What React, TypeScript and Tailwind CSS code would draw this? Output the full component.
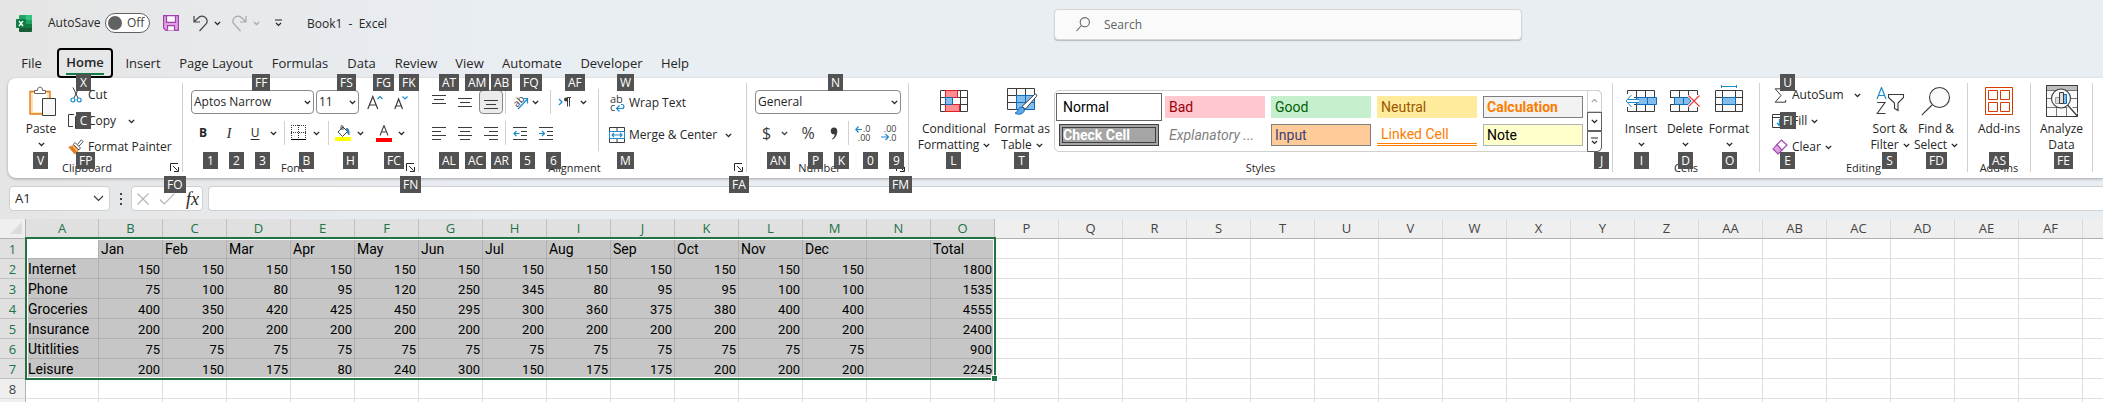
import React from "react";
import clsx from "clsx";

type Kids = { children?: React.ReactNode };

function Chev({ className }: { className?: string }) {
  return (
    <svg className={clsx("shrink-0", className)} width="7" height="5" viewBox="0 0 7 5" fill="none" stroke="currentColor" strokeWidth="1.3" aria-hidden="true">
      <path d="M.8.9 3.5 3.5 6.2.9" />
    </svg>
  );
}

function Tip({ at, children }: Kids & { at: string }) {
  return (
    <kbd className={clsx("absolute z-10 flex h-[17px] min-w-[15px] items-center justify-center bg-[#525252] px-[3px] font-[inherit] text-[12px] leading-[17px] text-white", at)}>
      {children}
    </kbd>
  );
}

function Sep({ className }: { className?: string }) {
  return <span className={clsx("mx-px w-px shrink-0 bg-[#d0d0d0]", className ?? "h-6")} />;
}

function Launcher({ name }: { name: string }) {
  return (
    <button aria-label={name} className="absolute right-[3px] bottom-0 text-[#262626]">
      <svg width="9" height="9" viewBox="0 0 9 9" fill="none" stroke="currentColor">
        <path d="M.5 8V.5H8M3 3l4.5 4.5M8.5 4v4.5H4" />
      </svg>
    </button>
  );
}

function Group({ label, className, launcher, tips, children }: Kids & { label?: string; className: string; launcher?: boolean; tips?: React.ReactNode }) {
  return (
    <section className={clsx("relative flex shrink-0 flex-col border-r border-[#d0d0d0]", className)}>
      <div className="flex h-[79px] items-start">{children}</div>
      <h2 className={clsx("h-[10px] text-center text-[11px] leading-3", launcher && "pr-4")}>{label}</h2>
      {launcher && <Launcher name={`${label} settings`} />}
      {tips}
    </section>
  );
}

function Big({ icon, lines, chev, className }: { icon: React.ReactNode; lines: string[]; chev?: "below" | "inline"; className: string }) {
  return (
    <button className={clsx("flex shrink-0 flex-col items-center pt-[2px] leading-4 whitespace-nowrap", className)}>
      <span className="mb-1 flex h-8 items-center justify-center">{icon}</span>
      {lines.map((l, i) => (
        <span key={l} className="flex items-center gap-1">
          {l}
          {chev === "inline" && i === lines.length - 1 && <Chev />}
        </span>
      ))}
      {chev === "below" && (
        <span className="flex h-[14px] items-center">
          <Chev />
        </span>
      )}
    </button>
  );
}

function Row({ icon, text, chev }: { icon: React.ReactNode; text: string; chev?: string }) {
  return (
    <button className="flex h-6 items-center gap-1 whitespace-nowrap">
      <span className="flex w-4 justify-center">{icon}</span>
      {text}
      {chev && <Chev className={chev} />}
    </button>
  );
}

function Combo({ label, value, className }: { label: string; value: string; className: string }) {
  return (
    <span className={clsx("relative flex h-6 shrink-0 items-center", className)}>
      <select aria-label={label} defaultValue={value} className="h-6 w-full appearance-none rounded-[4px] border border-[#8a8a8a] bg-white pl-[2px] text-[12px]">
        <option>{value}</option>
      </select>
      <Chev className="pointer-events-none absolute right-[3px]" />
    </span>
  );
}

function Tool({ label, className, children, pressed }: Kids & { label: string; className?: string; pressed?: boolean }) {
  return (
    <button aria-label={label} aria-pressed={pressed} className={clsx("flex h-6 shrink-0 items-center", className ?? "w-[26px] justify-center")}>
      {children}
    </button>
  );
}

/* Horizontal rules of the alignment icons: [x, width, y] */
function Bars({ bars }: { bars: number[][] }) {
  return (
    <svg width="14" height="14" viewBox="0 0 14 14" fill="#3b3b3b">
      {bars.map(([x, w, y]) => (
        <rect key={y} x={x} y={y} width={w} height="1" />
      ))}
    </svg>
  );
}

const PasteIcon = (
  <svg width="32" height="30" viewBox="-4 0 32 30" fill="none">
    <path d="M1 5.5h20V28H1z" fill="#fde3b0" stroke="#e07b1c" strokeWidth="1.4" />
    <path d="M4 7h14v19H4z" fill="#fff" />
    <path d="M5.500 7.500V4.500h3C8.500 2 9.500 1 11 1s2.500 1 2.500 3.500h3v3z" fill="#fff" stroke="#666" />
    <path d="M13.500 12.500h13v17h-13z" fill="#f8f8f8" stroke="#3b3b3b" />
  </svg>
);

const CutIcon = (
  <svg width="12" height="16" viewBox="0 0 12 16" fill="none">
    <path d="M3 .5 8 11M9 .5 4 11" stroke="#3b3b3b" />
    <circle cx="2.900" cy="13" r="2" stroke="#1e8bcd" strokeWidth="1.2" />
    <circle cx="9.100" cy="13" r="2" stroke="#1e8bcd" strokeWidth="1.2" />
  </svg>
);

const CopyIcon = (
  <svg width="16" height="16" viewBox="0 0 16 16" fill="none" stroke="#3b3b3b">
    <path d="M5 13.500H.5V1.500H6M7.500 15.500v-12h5l3 3v9z" />
  </svg>
);

const PainterIcon = (
  <svg width="16" height="16" viewBox="0 0 16 16" fill="none">
    <path d="M.8 8.200 5.500 6.500l5 4.500-3.500 4z" fill="#fbc177" stroke="#e07b1c" />
    <path d="M1.500 8.700 6.800 14.500l1.700-2.300-4-4.700z" fill="#e07b1c" />
    <path d="M7 3.500 12.500 9 10.800 11 5.300 5.300zM9.500 5.500 13.300.8l1.900 1.900L11 7" stroke="#555" fill="#fff" />
  </svg>
);

const BordersIcon = (
  <svg width="16" height="16" viewBox="0 0 16 16" fill="none" stroke="#3b3b3b">
    <path d="M0 .5h15M.5 0v14M14.500 0v14M0 7.500h15M7.500 0v14" strokeDasharray="1 1" />
    <path d="M0 14.500h15" stroke="#000" />
  </svg>
);

const FillColorIcon = (
  <svg width="16" height="16" viewBox="0 0 16 16" fill="none">
    <path d="m8 2 4.500 4.500-5 5L3 7zM6 5V1.500C6 .3 8 .3 8 1.500V5" stroke="#444" />
    <path d="M11.500 3.500c2 0 2.500 1.500 2.500 6-1.500-1-1.500-3.500-2.500-6z" fill="#1e8bcd" stroke="#1e6fb0" />
    <rect y="12" width="16" height="4" fill="#ff0" />
  </svg>
);

const FontColorIcon = (
  <svg width="16" height="17" viewBox="0 0 16 17" fill="none">
    <path d="m4 10.500 4-10 4 10M5.300 7h5.400" stroke="#444" strokeWidth="1.1" />
    <rect y="13" width="16" height="4" fill="#f00" />
  </svg>
);

const OrientIcon = (
  <svg width="17" height="16" viewBox="0 0 17 16" fill="none">
    <text x="1" y="12" transform="rotate(-45 5 8)" fontSize="10" fill="#3b3b3b">ab</text>
    <path d="m6 15 9.500-10M10.500 4.500h5v5" stroke="#1e8bcd" strokeWidth="1.2" />
  </svg>
);

const RtlIcon = (
  <svg width="14" height="12" viewBox="0 0 14 12" fill="none">
    <path d="m1 3 3 3-3 3" stroke="#1e8bcd" strokeWidth="1.3" />
    <path d="M13 1.500H9M9.500 1v9.500M11.500 1v9.500" stroke="#3b3b3b" />
    <circle cx="8" cy="3.500" r="2" fill="#3b3b3b" />
  </svg>
);

const IndentIcon = ({ out }: { out?: boolean }) => (
  <svg width="14" height="14" viewBox="0 0 14 14" fill="none">
    <path d="M0 1.500h14M8 5.500h6M8 9.500h6M0 13.500h14" stroke="#3b3b3b" />
    <path d={out ? "M6.500 7.500H1M3.500 5 1 7.500 3.500 10" : "M0 7.500h5.500M3 5l2.500 2.500L3 10"} stroke="#1e8bcd" strokeWidth="1.2" />
  </svg>
);

const WrapIcon = (
  <svg width="16" height="17" viewBox="0 0 16 17" fill="none">
    <text x="1" y="8" fontSize="11" fill="#3b3b3b">ab</text>
    <text x="1" y="16" fontSize="11" fill="#3b3b3b">c</text>
    <path d="M12 9.500h1c2.500 0 2.500 4 0 4H7.500M10.500 10.500l-3 3 3 3" stroke="#1e8bcd" strokeWidth="1.2" />
  </svg>
);

const MergeIcon = (
  <svg width="16" height="16" viewBox="0 0 16 16" fill="none">
    <path d="M.5.5h15v15H.5zM.5 4.500h15M.5 11.500h15M8 .5v4M8 11.500v4" stroke="#3b3b3b" />
    <path d="M.5 4.500h15v7H.5z" fill="#fff" stroke="#1e8bcd" />
    <path d="M3 8h10M5 6 3 8l2 2M11 6l2 2-2 2" stroke="#1e8bcd" strokeWidth="1.1" />
  </svg>
);

const DecimalIcon = ({ less }: { less?: boolean }) => (
  <svg width="16" height="16" viewBox="0 0 16 16" fill="none">
    <text x="15.500" y="7" textAnchor="end" fontSize="9" fill="#3b3b3b">{less ? ".00" : ".0"}</text>
    <text x="15.500" y="15.500" textAnchor="end" fontSize="9" fill="#3b3b3b">{less ? ".0" : ".00"}</text>
    <path d={less ? "M0 12h7M4.500 9 7.500 12l-3 3" : "M7 4.500H1M3.500 1.500.8 4.500l2.700 3"} stroke="#1e8bcd" strokeWidth="1.2" />
  </svg>
);

const ConditionalIcon = (
  <svg width="28" height="23" viewBox="0 0 28 23" fill="#fff">
    <path d="M.5.5h27v21H.5zM.5 7.500h27M.5 14.500h27M5.500.5v21M20.500.5v21" stroke="#3b3b3b" />
    <path d="M5.500.5h12v7h-12zM5.500 14.500h14v7h-14z" fill="#ff8f8f" stroke="#e0202a" />
    <path d="M5.500 7.500h7v7h-7z" fill="#83bdec" stroke="#0f6cbd" />
  </svg>
);

const FormatTableIcon = (
  <svg width="31" height="28" viewBox="0 0 31 28" fill="none">
    <path d="M.5 1.500h27v21H.5zM.5 8.500h27M.5 15.500h27M9.500 1.500v21M18.500 1.500v21" fill="#fafafa" stroke="#3b3b3b" />
    <path d="M9.500 8.500h18v14h-18zM9.500 15.500h18M18.500 8.500v14" fill="#83bdec" stroke="#0f6cbd" />
    <path d="M15 19.500 27.500 7.500c1-1 3 0 2 1.800L18.500 22z" fill="#fff" stroke="#3b3b3b" />
    <path d="M8 26c3 0 2-4 5-5.500 3-1 5.500 1.500 4 4-1.500 3-6 3.500-9 1.500z" fill="#62a8e0" stroke="#0f6cbd" />
  </svg>
);

const gridPath = "M.5 4.500h27v21H.5zM.5 11.500h27M.5 18.500h27M9.500 4.500v21M18.500 4.500v21";

const InsertIcon = (
  <svg width="32" height="30" viewBox="0 0 32 30" fill="none">
    <path transform="translate(2)" d={gridPath} fill="#fafafa" stroke="#3b3b3b" />
    <path d="M0 8h9v13H0z" fill="#fff" />
    <path d="M11.500 11.500h20v7h-20zM22.500 11.500v7" fill="#83bdec" stroke="#0f6cbd" />
    <path d="M2 15h12" stroke="#fff" strokeWidth="3" />
    <path d="M14 13.500H3M14 16.500H3M6.500 9 1 15l5.500 6" stroke="#1e8bcd" />
  </svg>
);

const DeleteIcon = (
  <svg width="30" height="30" viewBox="0 0 30 30" fill="none">
    <path d={gridPath} fill="#fafafa" stroke="#3b3b3b" />
    <path d="M0 12h4v6H0zM18 9h12v12H18z" fill="#fff" />
    <path d="M4.500 11.500H18l3 3.500-3 3.500H4.500zM13.500 11.500v7" fill="#83bdec" stroke="#0f6cbd" />
    <path d="m18.500 9.500 11 11M29.500 9.500l-11 11" stroke="#ee3e3e" strokeWidth="1.2" />
  </svg>
);

const FormatIcon = (
  <svg width="28" height="32" viewBox="0 0 28 32" fill="none">
    <path transform="translate(0 1)" d="M.5 4.500h27v21H.5zM.5 11.500h27M.5 18.500h27M7.500 4.500v21M20.500 4.500v21" fill="#fafafa" stroke="#3b3b3b" />
    <path d="M7.500 12.500h13v7h-13z" fill="#83bdec" stroke="#0f6cbd" />
    <path d="M6.500 1.500h15M6.500 0v3M21.500 0v3" stroke="#1e8bcd" />
  </svg>
);

const SumIcon = (
  <svg width="13" height="15" viewBox="0 0 13 15" fill="none" stroke="#3b3b3b">
    <path d="M11.500 3V.8H1.200L7 7.500 1.200 14.200h10.500V12" />
  </svg>
);

const FillIcon = (
  <svg width="16" height="14" viewBox="0 0 16 14" fill="none">
    <path d="M.5.5v13h14V.5zM.5 3.500h14" stroke="#3b3b3b" />
    <path d="M7.500 5v6.500M5 9l2.500 2.500L10 9" stroke="#1e8bcd" strokeWidth="1.3" />
  </svg>
);

const ClearIcon = (
  <svg width="16" height="16" viewBox="0 0 16 16" fill="none" stroke="#a33fae" strokeWidth="1.1">
    <path d="m1 10 4-4.500 5 5.500-4 4z" fill="#dca4e0" />
    <path d="M5 5.500 9.500 1 15 6l-5 5z" fill="#fff" />
  </svg>
);

const SortIcon = (
  <svg width="29" height="28" viewBox="0 0 29 28" fill="none">
    <path d="m1 12 4.500-11.500L10 12M2.700 8.500h5.600" stroke="#1e8bcd" strokeWidth="1.2" />
    <path d="M1.200 15.500H9L1.200 26.500H9.500M12.500 7.500h15v3L22 16v7.500l-3.500-2V16l-6-5.500z" stroke="#3b3b3b" strokeWidth="1.1" />
  </svg>
);

const FindIcon = (
  <svg width="30" height="30" viewBox="0 0 30 30" fill="none" stroke="#3b3b3b" strokeWidth="1.1">
    <circle cx="18.500" cy="11.500" r="10" fill="#fafafa" />
    <path d="M11 19 .8 29.200" />
  </svg>
);

const AddInsIcon = (
  <svg width="28" height="28" viewBox="0 0 28 28" fill="none" stroke="#d83b01">
    <path d="M.5.500h27v27H.5zM3.500 3.500h9v9h-9zM15.500 3.500h9v9h-9zM3.500 15.500h9v9h-9zM15.500 15.500h9v9h-9z" />
  </svg>
);

const AnalyzeIcon = (
  <svg width="32" height="32" viewBox="0 0 32 32" fill="none">
    <path d="M.5.500h31v31H.5z" fill="#fafafa" stroke="#3b3b3b" />
    <path d="M1 1h30v4H1z" fill="#bdbdbd" />
    <path d="M.5 5.500h31M.5 13.500h31M.5 22.500h31M10.500 22v9M20.500 22v9" stroke="#777" />
    <path d="M.5.500h31v31H.5z" stroke="#3b3b3b" />
    <circle cx="15" cy="13.500" r="9.500" fill="#fafafa" stroke="#3b3b3b" strokeWidth="1.100" />
    <path d="M9.500 12.500h4v6h-4z" fill="#ddd" stroke="#999" />
    <path d="M17.500 9.500h3v9h-3z" fill="#83bdec" stroke="#0f6cbd" />
    <path d="M13.500 7.500h4v11h-4z" fill="#ddd" stroke="#3b3b3b" />
    <path d="m22.500 21 8 8.500" stroke="#fff" strokeWidth="4" />
    <path d="m21.800 20.300 9.700 11" stroke="#3b3b3b" strokeWidth="1.300" />
  </svg>
);

const ExcelLogo = (
  <svg width="16" height="17" viewBox="0 0 16 17">
    <rect x="3" width="13" height="17" rx="1.200" fill="#21a366" />
    <path d="M3 5h6.500v4H3zM3 9h6.500v4H3z" fill="#107c41" />
    <path d="M9.500 0h5.300c.7 0 1.200.5 1.200 1.200V5H9.500z" fill="#33c481" />
    <path d="M3 9h13v6.800c0 .7-.5 1.200-1.200 1.200H4.200C3.500 17 3 16.500 3 15.800z" fill="#185c37" />
    <path d="M9.500 9H16v4H9.500z" fill="#107c41" />
    <rect y="4" width="10" height="9" rx="1" fill="#107c41" />
    <path d="m3 6 4 5M7 6l-4 5" stroke="#fff" strokeWidth="1.400" />
  </svg>
);

const SaveIcon = (
  <svg width="16" height="16" viewBox="0 0 16 16" fill="none" stroke="#a33fae" strokeWidth="1.200">
    <path d="M.6.6h14.800v14.800H3L.6 13z" fill="#dca4e0" />
    <path d="M3.500.6h9v6.800h-9zM4.500 15.400v-4.800h7v4.800" fill="#f8f8f8" />
  </svg>
);

const UndoIcon = ({ flip, className }: { flip?: boolean; className?: string }) => (
  <svg width="15" height="17" viewBox="0 0 15 17" className={className} fill="none" stroke="currentColor" strokeWidth="1.200">
    <g transform={flip ? "matrix(-1 0 0 1 15 0)" : undefined}>
      <path d="M1 1v6h6M1 7l4-4c4-4.500 11 0 8.500 5.500L6.500 16" />
    </g>
  </svg>
);

const tabs: [string, string][] = [
  ["File", "w-[43px]"],
  ["Home", "w-[56px] mx-1"],
  ["Insert", "w-[52px]"],
  ["Page Layout", "w-[94px]"],
  ["Formulas", "w-[74px]"],
  ["Data", "w-[49px]"],
  ["Review", "w-[60px]"],
  ["View", "w-[47px]"],
  ["Automate", "w-[78px]"],
  ["Developer", "w-[81px]"],
  ["Help", "w-[46px]"],
];

const styles: [string, string][] = [
  ["Normal", "bg-white border-2 border-white text-black outline outline-[#666] outline-offset-2 pl-[2px]"],
  ["Bad", "bg-[#ffc7ce] text-[#9c0006] pl-1"],
  ["Good", "bg-[#c6efce] text-[#006100] pl-1"],
  ["Neutral", "bg-[#ffeb9c] text-[#9c5700] pl-1"],
  ["Calculation", "bg-[#f2f2f2] border border-[#7f7f7f] text-[#fa7d00] font-bold pl-[3px]"],
  ["Check Cell", "bg-[#a5a5a5] border-4 border-double border-[#3f3f3f] text-white font-bold"],
  ["Explanatory ...", "text-[#7f7f7f] italic pl-1"],
  ["Input", "bg-[#ffcc99] border border-[#7f7f7f] text-[#3f3f76] pl-[3px]"],
  ["Linked Cell", "border-b-3 border-double border-[#ff8001] text-[#fa7d00] pl-1"],
  ["Note", "bg-[#ffffcc] border border-[#b2b2b2] text-black pl-[3px]"],
];

const months = ["Jan", "Feb", "Mar", "Apr", "May", "Jun", "Jul", "Aug", "Sep", "Oct", "Nov", "Dec"];
const same = (n: number) => months.map(() => n);
const budget: (string | number)[][] = [
  ["", ...months, "", "Total"],
  ["Internet", ...same(150), "", 1800],
  ["Phone", 75, 100, 80, 95, 120, 250, 345, 80, 95, 95, 100, 100, "", 1535],
  ["Groceries", 400, 350, 420, 425, 450, 295, 300, 360, 375, 380, 400, 400, "", 4555],
  ["Insurance", ...same(200), "", 2400],
  ["Utitlities", ...same(75), "", 900],
  ["Leisure", 200, 150, 175, 80, 240, 300, 150, 175, 175, 200, 200, 200, "", 2245],
];
const cols = Array.from({ length: 33 }, (_, i) => (i < 26 ? "" : "A") + String.fromCharCode(65 + (i % 26)));
const ROWS = 9;

function TitleBar() {
  return (
    <header className="flex h-12 items-start">
      <div className="flex w-[1054px] shrink-0 items-center pt-[13px] pl-4">
        {ExcelLogo}
        <label className="ml-4 flex items-center">
          <span className="w-[57px]">AutoSave</span>
          <input type="checkbox" role="switch" className="peer sr-only" />
          <span className="flex h-5 w-[45px] items-center gap-[5px] rounded-full border border-[#616161] bg-white pl-[2px]">
            <span className="size-[14px] rounded-full bg-[#616161]" />
            <span className="text-[#444]">Off</span>
          </span>
        </label>
        <button aria-label="Save" className="ml-[13px]">{SaveIcon}</button>
        <button aria-label="Undo" className="ml-[14px] flex items-center gap-[6px]">
          <UndoIcon className="text-[#444]" />
          <Chev />
        </button>
        <button aria-label="Redo" className="ml-[11px] flex items-center gap-[6px] text-[#a8a8a8]">
          <UndoIcon flip />
          <Chev />
        </button>
        <button aria-label="Customize Quick Access Toolbar" className="ml-[14px]">
          <svg width="9" height="8" viewBox="0 0 9 8" fill="none" stroke="currentColor" strokeWidth="1.200">
            <path d="M1 1h7M2 4l2.500 2.500L7 4" />
          </svg>
        </button>
        <h1 className="ml-6 pt-px whitespace-pre">Book1  -  Excel</h1>
      </div>
      <div className="mt-[9px] flex h-[31px] w-[468px] items-center gap-[14px] rounded-[4px] border border-[#d4d6d8] bg-[#fafafa] pl-[21px] shadow-[0_1px_1px_#bbb]">
        <svg className="shrink-0" width="14" height="15" viewBox="0 0 14 15" fill="none" stroke="#666" strokeWidth="1.100" aria-hidden="true">
          <circle cx="8.800" cy="5.200" r="4.600" />
          <path d="M5.500 8.500.5 14" />
        </svg>
        <input type="search" aria-label="Search" placeholder="Search" className="w-full bg-transparent text-[12px] outline-none placeholder:text-[#616161]" />
      </div>
    </header>
  );
}

function Tabs() {
  return (
    <nav className="flex h-[30px] items-center pl-[10px] text-[13px]">
      {tabs.map(([name, w]) =>
        name === "Home" ? (
          <button key={name} aria-current="page" className={clsx("flex h-[30px] shrink-0 flex-col items-center justify-end rounded-[4px] border-2 border-black pb-px font-semibold", w)}>
            <span className="border-b-2 border-[#107c41] leading-[21px]">{name}</span>
          </button>
        ) : (
          <button key={name} className={clsx("shrink-0 pt-[2px] text-center whitespace-nowrap", w)}>
            {name}
          </button>
        ),
      )}
    </nav>
  );
}

function Ribbon() {
  return (
    <div className="relative ml-2 flex h-[100px] rounded-l-lg bg-white pt-[5px] pb-[6px] shadow-[0_1px_3px_rgba(0,0,0,0.3)]">
      <Group
        label="Clipboard"
        launcher
        className="w-[175px]"
        tips={
          <>
            <Tip at="left-[68px] top-[-9px]">X</Tip>
            <Tip at="left-[68px] top-[29px]">C</Tip>
            <Tip at="left-[68px] top-[69px]">FP</Tip>
            <Tip at="left-[25px] top-[69px]">V</Tip>
            <Tip at="left-[156px] top-[93px]">FO</Tip>
          </>
        }
      >
        <Big className="ml-3 w-[42px]" icon={PasteIcon} lines={["Paste"]} chev="below" />
        <div className="ml-[6px] flex flex-col gap-[2px]">
          <Row icon={CutIcon} text="Cut" />
          <Row icon={CopyIcon} text="Copy" chev="ml-2" />
          <Row icon={PainterIcon} text="Format Painter" />
        </div>
      </Group>

      <Group
        label="Font"
        launcher
        className="w-[236px]"
        tips={
          <>
            <Tip at="left-[69px] top-[-9px]">FF</Tip>
            <Tip at="left-[154px] top-[-9px]">FS</Tip>
            <Tip at="left-[190px] top-[-9px]">FG</Tip>
            <Tip at="left-[216px] top-[-9px]">FK</Tip>
            <Tip at="left-[20px] top-[69px]">1</Tip>
            <Tip at="left-[46px] top-[69px]">2</Tip>
            <Tip at="left-[72px] top-[69px]">3</Tip>
            <Tip at="left-[116px] top-[69px]">B</Tip>
            <Tip at="left-[160px] top-[69px]">H</Tip>
            <Tip at="left-[201px] top-[69px]">FC</Tip>
            <Tip at="left-[217px] top-[93px]">FN</Tip>
          </>
        }
      >
        <div className="flex flex-col gap-[7px] pt-[7px] pl-[7px]">
          <div className="flex">
            <Combo label="Font" value="Aptos Narrow" className="ml-px w-[123px]" />
            <Combo label="Font size" value="11" className="ml-[2px] w-[43px]" />
            <Tool label="Increase font size" className="ml-[3px] w-[26px] justify-center">
              <svg width="16" height="15" viewBox="0 0 16 15" fill="none">
                <path d="M.8 14 5.800 1.500l5 12.500M2.500 10h6.600" stroke="#3b3b3b" strokeWidth="1.200" />
                <path d="M10.500 4 13 1.500 15.500 4" stroke="#1e8bcd" strokeWidth="1.200" />
              </svg>
            </Tool>
            <Tool label="Decrease font size">
              <svg width="14" height="15" viewBox="0 0 14 15" fill="none">
                <path d="M.8 14 4.600 4l3.900 10M2.200 11h5" stroke="#3b3b3b" strokeWidth="1.200" />
                <path d="M8.500 1.500 11 4l2.500-2.500" stroke="#1e8bcd" strokeWidth="1.200" />
              </svg>
            </Tool>
          </div>
          <div className="flex items-center">
            <Tool label="Bold"><b>B</b></Tool>
            <Tool label="Italic"><i className="font-['Liberation_Serif',serif] text-[14px]">I</i></Tool>
            <Tool label="Underline"><u className="underline-offset-2">U</u></Tool>
            <Tool label="Underline style" className="w-[15px] pl-[2px]"><Chev /></Tool>
            <Sep />
            <Tool label="Borders" className="w-[41px] gap-[6px] pl-[5px]">{BordersIcon}<Chev /></Tool>
            <Sep />
            <Tool label="Fill color" className="w-[41px] gap-[6px] pl-[5px]">{FillColorIcon}<Chev /></Tool>
            <Tool label="Font color" className="w-[41px] gap-[6px] pl-[5px]">{FontColorIcon}<Chev /></Tool>
          </div>
        </div>
      </Group>

      <Group
        label="Alignment"
        launcher
        className="w-[328px]"
        tips={
          <>
            <Tip at="left-[20px] top-[-9px]">AT</Tip>
            <Tip at="left-[46px] top-[-9px]">AM</Tip>
            <Tip at="left-[72px] top-[-9px]">AB</Tip>
            <Tip at="left-[101px] top-[-9px]">FQ</Tip>
            <Tip at="left-[146px] top-[-9px]">AF</Tip>
            <Tip at="left-[198px] top-[-9px]">W</Tip>
            <Tip at="left-[20px] top-[69px]">AL</Tip>
            <Tip at="left-[46px] top-[69px]">AC</Tip>
            <Tip at="left-[72px] top-[69px]">AR</Tip>
            <Tip at="left-[101px] top-[69px]">5</Tip>
            <Tip at="left-[127px] top-[69px]">6</Tip>
            <Tip at="left-[198px] top-[69px]">M</Tip>
            <Tip at="left-[310px] top-[93px]">FA</Tip>
          </>
        }
      >
        <div className="flex w-[178px] flex-col gap-[7px] pt-[7px] pl-[7px]">
          <div className="flex items-center">
            <Tool label="Top align"><Bars bars={[[0, 14, 0], [2, 10, 4], [0, 14, 8]]} /></Tool>
            <Tool label="Middle align"><Bars bars={[[0, 14, 3], [2, 10, 7], [0, 14, 11]]} /></Tool>
            <Tool label="Bottom align" pressed className="mx-px w-6 justify-center rounded-[4px] border border-[#8a8a8a] bg-[#ebebeb]">
              <Bars bars={[[0, 14, 5], [2, 10, 9], [0, 14, 13]]} />
            </Tool>
            <Sep />
            <Tool label="Orientation" className="w-[42px] gap-[3px] pl-[5px]">{OrientIcon}<Chev /></Tool>
            <Sep />
            <Tool label="Text direction" className="w-[45px] gap-[8px] pl-[6px]">{RtlIcon}<Chev /></Tool>
          </div>
          <div className="flex items-center">
            <Tool label="Align left"><Bars bars={[[0, 14, 1], [0, 9, 5], [0, 14, 9], [0, 9, 13]]} /></Tool>
            <Tool label="Center"><Bars bars={[[0, 14, 1], [2, 10, 5], [0, 14, 9], [2, 10, 13]]} /></Tool>
            <Tool label="Align right"><Bars bars={[[0, 14, 1], [5, 9, 5], [0, 14, 9], [5, 9, 13]]} /></Tool>
            <Sep />
            <Tool label="Decrease indent"><IndentIcon out /></Tool>
            <Tool label="Increase indent"><IndentIcon /></Tool>
          </div>
        </div>
        <Sep className="mt-[6px] h-[62px]" />
        <div className="flex flex-col gap-2 pt-2 pl-[9px]">
          <Row icon={WrapIcon} text="Wrap Text" />
          <Row icon={MergeIcon} text="Merge & Center" chev="ml-1" />
        </div>
      </Group>

      <Group
        label="Number"
        launcher
        className="w-[162px]"
        tips={
          <>
            <Tip at="left-[81px] top-[-9px]">N</Tip>
            <Tip at="left-[20px] top-[69px]">AN</Tip>
            <Tip at="left-[61px] top-[69px]">P</Tip>
            <Tip at="left-[87px] top-[69px]">K</Tip>
            <Tip at="left-[116px] top-[69px]">0</Tip>
            <Tip at="left-[142px] top-[69px]">9</Tip>
            <Tip at="left-[142px] top-[93px]">FM</Tip>
          </>
        }
      >
        <div className="flex flex-col gap-[7px] pt-[7px] pl-2">
          <Combo label="Number format" value="General" className="w-[146px]" />
          <div className="flex items-center text-[16px] text-[#3b3b3b]">
            <Tool label="Accounting number format" className="w-10 gap-[10px] pl-[7px]">$<Chev /></Tool>
            <Tool label="Percent style">%</Tool>
            <Tool label="Comma style">
              <svg width="8" height="13" viewBox="0 0 8 13" fill="#3b3b3b">
                <path d="M4 .5C6.500.5 7.500 2.500 7.300 5 7 8.500 5 11.500 2 12.500l-.3-.7C3.700 10.600 4.700 9 4.700 7.200 2.500 7.800.7 6 .7 3.900.7 2 2 .5 4 .5z" />
              </svg>
            </Tool>
            <Sep />
            <Tool label="Increase decimal"><DecimalIcon /></Tool>
            <Tool label="Decrease decimal"><DecimalIcon less /></Tool>
          </div>
        </div>
      </Group>

      <Group
        label="Styles"
        className="w-[704px]"
        tips={
          <>
            <Tip at="left-[37px] top-[69px]">L</Tip>
            <Tip at="left-[105px] top-[69px]">T</Tip>
            <Tip at="left-[685px] top-[69px]">J</Tip>
          </>
        }
      >
        <Big className="ml-[6px] w-[78px]" icon={ConditionalIcon} lines={["Conditional", "Formatting"]} chev="inline" />
        <Big className="w-[58px]" icon={FormatTableIcon} lines={["Format as", "Table"]} chev="inline" />
        <div className="mt-[7px] ml-[3px] flex h-[62px] rounded-[5px] border border-[#d0d0d0] pl-1">
          <div className="mt-[5px] grid auto-rows-[22px] grid-cols-[repeat(5,100px)] content-start gap-[6px] text-[14px]">
            {styles.map(([name, cls]) => (
              <button key={name} className={clsx("flex items-center text-left leading-[14px] whitespace-nowrap font-['Roboto',sans-serif]", cls)}>
                {name}
              </button>
            ))}
          </div>
          <div className="-my-px -mr-px ml-1 flex w-[15px] flex-col">
            <button aria-label="Previous styles" className="flex flex-1 items-center justify-center rounded-tr-[5px] border border-[#d0d0d0] text-[#a8a8a8]">
              <Chev className="rotate-180" />
            </button>
            <button aria-label="Next styles" className="flex h-[19px] items-center justify-center border border-[#616161]">
              <Chev />
            </button>
            <button aria-label="More styles" className="flex flex-1 items-center justify-center rounded-br-[5px] border border-[#616161]">
              <svg width="9" height="8" viewBox="0 0 9 8" fill="none" stroke="currentColor" strokeWidth="1.200">
                <path d="M1 1h7M2 4l2.500 2.500L7 4" />
              </svg>
            </button>
          </div>
        </div>
      </Group>

      <Group
        label="Cells"
        className="w-[147px]"
        tips={
          <>
            <Tip at="left-[21px] top-[69px]">I</Tip>
            <Tip at="left-[65px] top-[69px]">D</Tip>
            <Tip at="left-[109px] top-[69px]">O</Tip>
          </>
        }
      >
        <Big className="ml-[6px] w-11" icon={InsertIcon} lines={["Insert"]} chev="below" />
        <Big className="w-11" icon={DeleteIcon} lines={["Delete"]} chev="below" />
        <Big className="w-11" icon={FormatIcon} lines={["Format"]} chev="below" />
      </Group>

      <Group
        label="Editing"
        className="w-[208px]"
        tips={
          <>
            <Tip at="left-[20px] top-[-9px]">U</Tip>
            <Tip at="left-[20px] top-[29px]">FI</Tip>
            <Tip at="left-[20px] top-[69px]">E</Tip>
            <Tip at="left-[122px] top-[69px]">S</Tip>
            <Tip at="left-[166px] top-[69px]">FD</Tip>
          </>
        }
      >
        <div className="ml-3 flex w-[95px] shrink-0 flex-col gap-[2px]">
          <Row icon={SumIcon} text="AutoSum" chev="ml-[6px]" />
          <Row icon={FillIcon} text="Fill" chev="ml-0" />
          <Row icon={ClearIcon} text="Clear" chev="ml-0" />
        </div>
        <Big className="w-[46px]" icon={SortIcon} lines={["Sort &", "Filter"]} chev="inline" />
        <Big className="w-[46px]" icon={FindIcon} lines={["Find &", "Select"]} chev="inline" />
      </Group>

      <Group label="Add-ins" className="w-[63px]" tips={<Tip at="left-[21px] top-[69px]">AS</Tip>}>
        <Big className="w-full" icon={AddInsIcon} lines={["Add-ins"]} />
      </Group>

      <Group className="w-[62px]" tips={<Tip at="left-[23px] top-[69px]">FE</Tip>}>
        <Big className="w-full" icon={AnalyzeIcon} lines={["Analyze", "Data"]} />
      </Group>
    </div>
  );
}

function FormulaBar() {
  return (
    <div className="mt-2 flex h-[25px] items-stretch pl-[9px]">
      <div className="flex w-[101px] shrink-0 items-center rounded-[4px] border border-[#d0d0d0] bg-white pr-[5px]">
        <input aria-label="Name box" defaultValue="A1" className="w-full min-w-0 bg-transparent pl-[5px] text-[13px] outline-none" />
        <button aria-label="Open name list">
          <svg width="11" height="7" viewBox="0 0 11 7" fill="none" stroke="#3b3b3b" strokeWidth="1.200">
            <path d="m1 1 4.500 4.500L10 1" />
          </svg>
        </button>
      </div>
      <span className="flex w-[21px] shrink-0 flex-col items-center justify-center gap-[3px]">
        <span className="size-[2px] bg-[#444]" />
        <span className="size-[2px] bg-[#444]" />
        <span className="size-[2px] bg-[#444]" />
      </span>
      <div className="flex w-[72px] shrink-0 items-center rounded-[4px] border border-[#d0d0d0] bg-white pl-[5px]">
        <button aria-label="Cancel">
          <svg width="12" height="12" viewBox="0 0 12 12" fill="none" stroke="#b5b5b5" strokeWidth="1.200"><path d="m.5.5 11 11M11.500.5l-11 11" /></svg>
        </button>
        <button aria-label="Enter" className="ml-[10px]">
          <svg width="16" height="12" viewBox="0 0 16 12" fill="none" stroke="#b5b5b5" strokeWidth="1.200"><path d="m.8 6.500 4.500 4.500L15.200.8" /></svg>
        </button>
        <button aria-label="Insert function" className="ml-[11px] font-['Liberation_Serif',serif] text-[18px] leading-none text-[#262626] italic">fx</button>
      </div>
      <input aria-label="Formula bar" className="ml-[5px] w-full min-w-0 rounded-l-[4px] border border-r-0 border-[#d0d0d0] bg-white px-2 text-[13px] outline-none" />
    </div>
  );
}

function Sheet() {
  return (
    <main className="relative mt-2 min-h-0 flex-1 overflow-hidden bg-white">
      <table className="w-[2147px] table-fixed border-separate border-spacing-0">
        <colgroup>
          <col className="w-[26px]" />
          <col className="w-[73px]" />
          {cols.slice(1).map((c) => (
            <col key={c} className="w-16" />
          ))}
        </colgroup>
        <thead>
          <tr className="h-5 text-[13px]">
            <th className="border-r border-b border-[#b0b0b0] bg-[#efefef] p-0">
              <svg className="ml-auto" width="15" height="15" viewBox="0 0 15 15" fill="#dcdcdc" aria-hidden="true"><path d="M12 1v12H0z" /></svg>
            </th>
            {cols.map((c, i) => (
              <th key={c} scope="col" className={clsx("border-r border-b p-0 leading-[19px] font-normal", i < 15 ? "border-r-[#c0c0c0] border-b-[#217346] bg-[#e0e0e0] text-[#217346]" : "border-r-[#dadada] border-b-[#b0b0b0] bg-[#efefef] text-[#444]")}>
                {c}
              </th>
            ))}
          </tr>
        </thead>
        <tbody>
          {Array.from({ length: ROWS }, (_, r) => (
            <tr key={r} className="h-5">
              <th scope="row" className={clsx("border-r border-b p-0 pt-[2px] text-center text-[13px] leading-[17px] font-normal", r < 7 ? "border-r-[#217346] border-b-[#c0c0c0] bg-[#e0e0e0] text-[#217346]" : "border-r-[#b0b0b0] border-b-[#dadada] bg-[#efefef] text-[#444]")}>
                {r + 1}
              </th>
              {cols.map((c, i) => {
                const v = budget[r]?.[i] ?? "";
                const picked = r < 7 && i < 15;
                return (
                  <td
                    key={c}
                    className={clsx(
                      "border-r border-b px-[2px] pt-[2px] pb-0 leading-[17px] whitespace-nowrap text-black font-['Roboto',sans-serif]",
                      typeof v === "number" ? "text-right text-[13px]" : "text-left text-[14px]",
                      picked ? "border-[#b0b0b0]" : "border-[#dedede]",
                      picked && (r > 0 || i > 0) ? "bg-[#c6c6c6]" : "bg-white",
                    )}
                  >
                    {v}
                  </td>
                );
              })}
            </tr>
          ))}
        </tbody>
      </table>
      <div className="pointer-events-none absolute top-[18px] left-[25px] h-[143px] w-[971px] border-2 border-[#217346] shadow-[inset_0_0_0_1px_#fff]">
        <span className="absolute -right-[4px] -bottom-[4px] size-[7px] border border-white bg-[#217346]" />
      </div>
    </main>
  );
}

export default function App() {
  return (
    <div className="flex h-screen flex-col overflow-hidden bg-linear-to-r from-[#e5e5e5] via-[#e9eef3] via-25% to-[#e9eef2] font-['Open_Sans','Noto_Sans',sans-serif] text-[12px] text-[#262626]">
      <TitleBar />
      <Tabs />
      <Ribbon />
      <FormulaBar />
      <Sheet />
    </div>
  );
}
